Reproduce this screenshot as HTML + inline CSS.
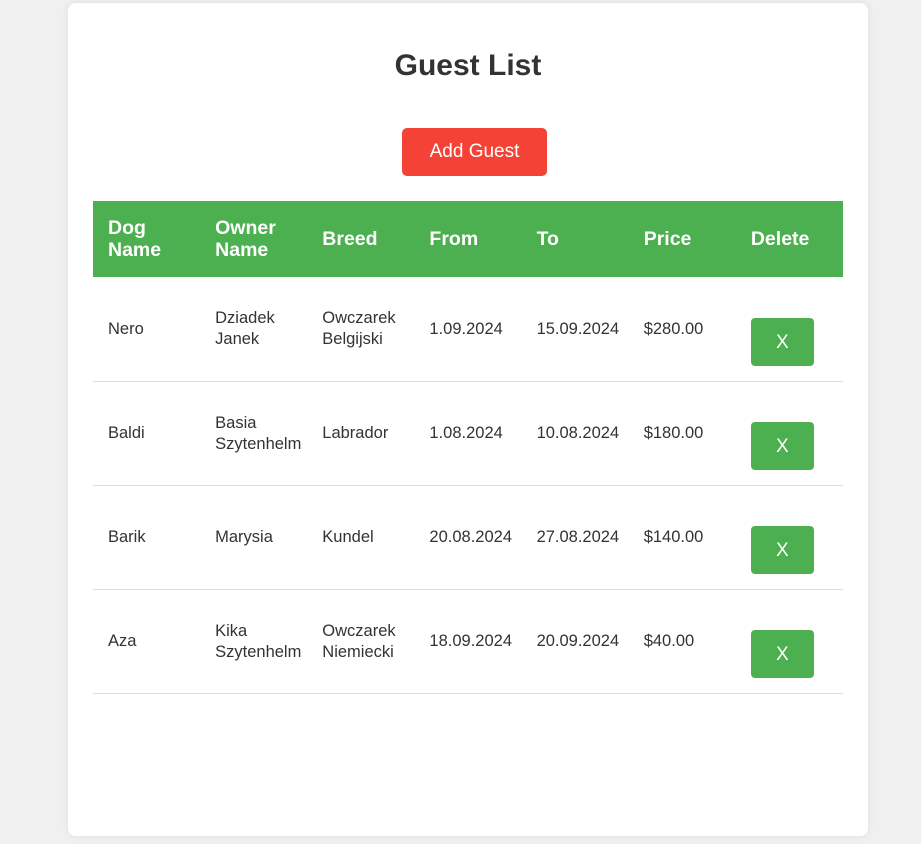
<!DOCTYPE html>
<html><head><meta charset="utf-8"><style>
body{margin:0;background:#f0f0f0;font-family:"Liberation Sans",Arial,sans-serif;color:#333;}
.card{position:absolute;left:68px;top:3px;width:800px;height:833px;background:#fff;border-radius:8px;box-shadow:0 0 8px rgba(0,0,0,0.08);}
h1{position:absolute;top:45px;left:0;width:800px;text-align:center;margin:0;font-size:30px;line-height:36px;font-weight:bold;color:#333;}
.add{position:absolute;left:334px;top:125px;width:145px;height:48px;background:#f44336;color:#fff;border-radius:5px;font-size:19px;line-height:48px;text-align:center;}
table{position:absolute;left:25px;top:198px;width:750px;border-collapse:collapse;table-layout:fixed;}
th{background:#4caf50;color:#fff;font-size:19.5px;line-height:22px;text-align:left;padding:0 0 0 15px;height:76px;font-weight:bold;}
td{font-size:16.5px;line-height:21px;padding:0 0 0 15px;height:103px;border-bottom:1px solid #ddd;vertical-align:middle;}
tr:nth-child(2) td{height:104px;}
.x{display:inline-block;width:63px;height:48px;background:#4caf50;color:#fff;border-radius:4px;text-align:center;line-height:50px;font-size:19px;margin-top:26px;}
tr:nth-child(n+3) .x{margin-top:24px;}
</style></head><body>
<div class="card">
<h1>Guest List</h1>
<div class="add">Add Guest</div>
<table>
<tr><th>Dog<br>Name</th><th>Owner<br>Name</th><th>Breed</th><th>From</th><th>To</th><th>Price</th><th>Delete</th></tr>
<tr><td>Nero</td><td>Dziadek<br>Janek</td><td>Owczarek<br>Belgijski</td><td>1.09.2024</td><td>15.09.2024</td><td>$280.00</td><td><span class="x">X</span></td></tr>
<tr><td>Baldi</td><td>Basia<br>Szytenhelm</td><td>Labrador</td><td>1.08.2024</td><td>10.08.2024</td><td>$180.00</td><td><span class="x">X</span></td></tr>
<tr><td>Barik</td><td>Marysia</td><td>Kundel</td><td>20.08.2024</td><td>27.08.2024</td><td>$140.00</td><td><span class="x">X</span></td></tr>
<tr><td>Aza</td><td>Kika<br>Szytenhelm</td><td>Owczarek<br>Niemiecki</td><td>18.09.2024</td><td>20.09.2024</td><td>$40.00</td><td><span class="x">X</span></td></tr>
</table>
</div>
</body></html>
